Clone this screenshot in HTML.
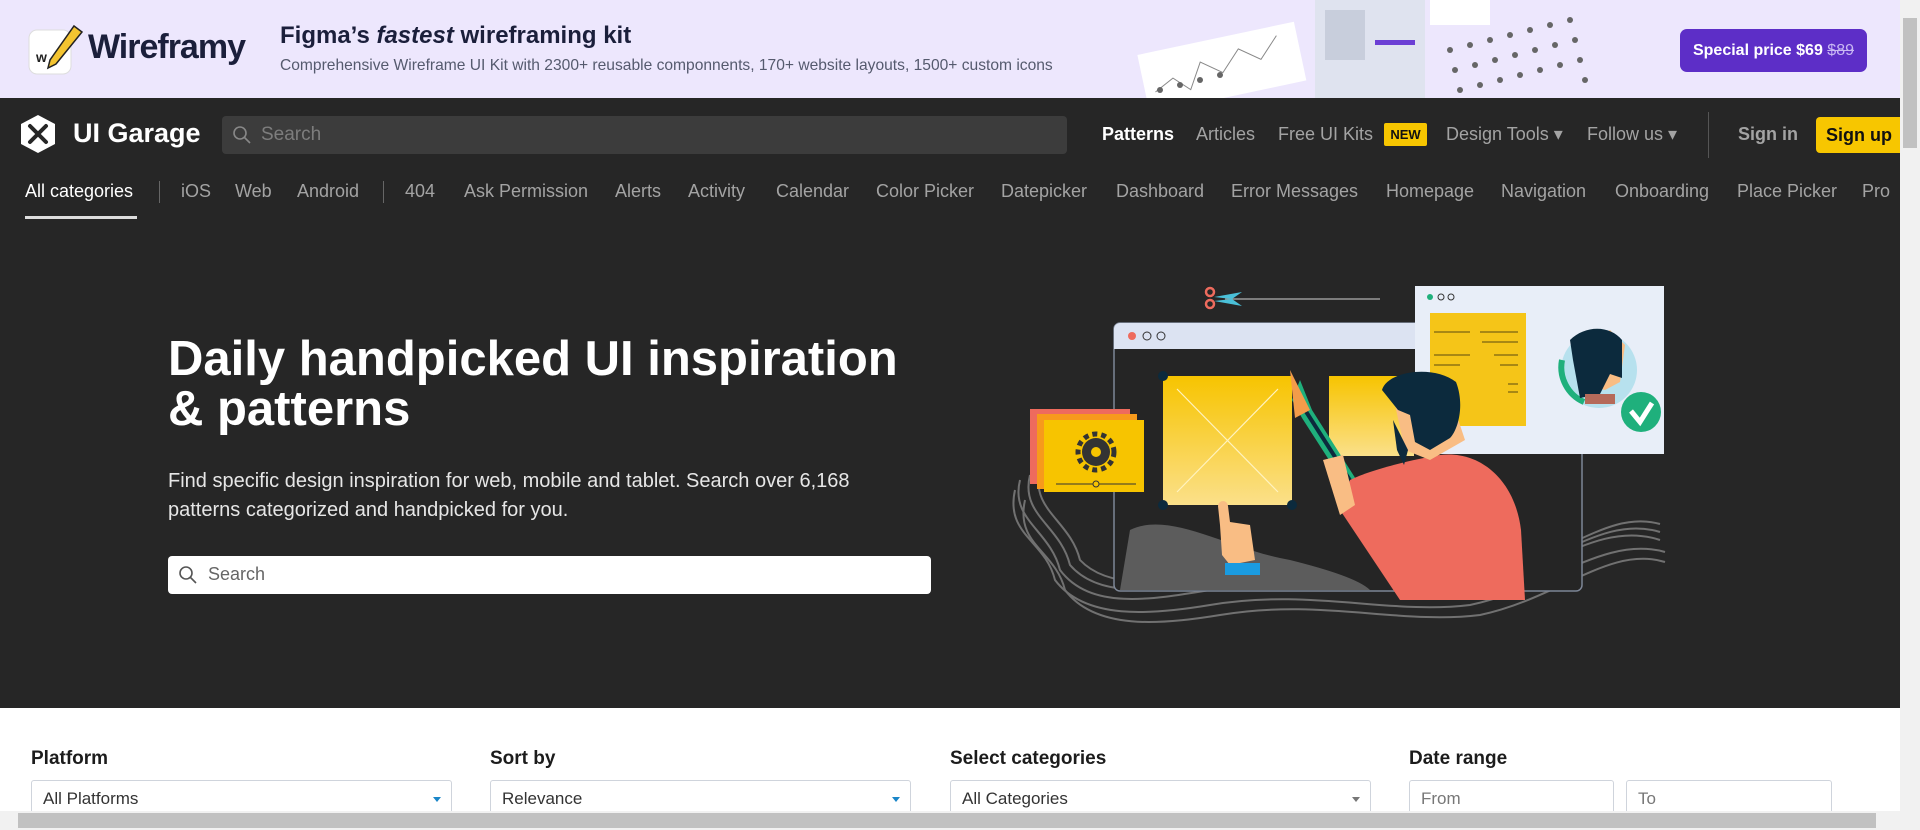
<!DOCTYPE html>
<html><head><meta charset="utf-8">
<style>
*{box-sizing:border-box;margin:0;padding:0}
html,body{width:1920px;height:830px;overflow:hidden;background:#fff;font-family:"Liberation Sans",sans-serif}
.abs{position:absolute}
#banner{position:absolute;left:0;top:0;width:1900px;height:98px;background:#ede7fd;overflow:hidden}
#nav{position:absolute;left:0;top:98px;width:1900px;height:610px;background:#262626}
.cat{position:absolute;top:181px;font-size:18px;color:#a3a3a3;white-space:nowrap}
.navl{position:absolute;top:124px;font-size:18px;color:#a3a3a3;white-space:nowrap}
.lbl{position:absolute;top:748px;font-size:19px;font-weight:bold;color:#1c1c1c}
.inp{position:absolute;top:780px;height:40px;border:1px solid #cfd4dc;border-radius:3px;background:#fff;font-size:17px;color:#333;padding:8px 11px}
.car{position:absolute;right:10px;top:16px;width:0;height:0;border-left:4px solid transparent;border-right:4px solid transparent;border-top:5px solid #1a86c8}
</style></head><body>
<div id="banner">
  <svg class="abs" style="left:26px;top:24px" width="60" height="54" viewBox="0 0 60 54">
    <rect x="3" y="6" width="42" height="44" rx="8" fill="#fff" stroke="#ddd"/>
    <text x="10" y="38" font-size="14" font-weight="bold" fill="#222" font-family="Liberation Sans">w</text>
    <path d="M48 2 L56 8 L30 40 L22 44 L24 36 Z" fill="#f4c430" stroke="#222" stroke-width="1.5"/>
  </svg>
  <div class="abs" style="left:88px;top:28px;font-size:34px;font-weight:bold;color:#1b1f3b;letter-spacing:-1px">Wireframy</div>
  <div class="abs" style="left:280px;top:22px;font-size:24px;font-weight:bold;color:#1b1f3b">Figma’s <i>fastest</i> wireframing kit</div>
  <div class="abs" style="left:280px;top:57px;font-size:15.6px;color:#555a6e">Comprehensive Wireframe UI Kit with 2300+ reusable componnents, 170+ website layouts, 1500+ custom icons</div>
  <svg class="abs" style="left:1130px;top:0" width="560" height="98">
    <g transform="rotate(-12 80 60)"><rect x="10" y="40" width="160" height="60" fill="#fff"/><path d="M20 80 L40 70 L55 85 L70 60 L90 75 L110 55 L130 70 L150 50" stroke="#888" fill="none"/></g>
    <rect x="185" y="0" width="110" height="98" fill="#dfe3ef"/><rect x="195" y="10" width="40" height="50" fill="#c8cedc"/><rect x="245" y="40" width="40" height="5" fill="#6b3fd4"/>
    <rect x="300" y="0" width="60" height="25" fill="#fff"/>
    <g fill="#666"><circle cx="320" cy="50" r="3"/><circle cx="340" cy="45" r="3"/><circle cx="360" cy="40" r="3"/><circle cx="380" cy="35" r="3"/><circle cx="400" cy="30" r="3"/><circle cx="420" cy="25" r="3"/><circle cx="325" cy="70" r="3"/><circle cx="345" cy="65" r="3"/><circle cx="365" cy="60" r="3"/><circle cx="385" cy="55" r="3"/><circle cx="405" cy="50" r="3"/><circle cx="425" cy="45" r="3"/><circle cx="330" cy="90" r="3"/><circle cx="350" cy="85" r="3"/><circle cx="370" cy="80" r="3"/><circle cx="390" cy="75" r="3"/><circle cx="410" cy="70" r="3"/><circle cx="430" cy="65" r="3"/><circle cx="440" cy="20" r="3"/><circle cx="445" cy="40" r="3"/><circle cx="450" cy="60" r="3"/><circle cx="455" cy="80" r="3"/><circle cx="30" cy="90" r="3"/><circle cx="50" cy="85" r="3"/><circle cx="70" cy="80" r="3"/><circle cx="90" cy="75" r="3"/></g>
  </svg>
  <div class="abs" style="left:1680px;top:29px;width:187px;height:43px;background:#5d2ec7;border-radius:7px;color:#fff;font-size:16px;font-weight:bold;line-height:43px;text-align:center">Special price $69 <span style="text-decoration:line-through;font-weight:normal;color:#c9b8f3">$89</span></div>
</div>
<div id="nav"></div>
<svg class="abs" style="left:19px;top:114px" width="38" height="40" viewBox="0 0 38 40">
  <path d="M19 1 L36 10 L36 30 L19 39 L2 30 L2 10 Z" fill="#fff"/>
  <path d="M11 12 L27 28 M27 12 L11 28" stroke="#262626" stroke-width="4" stroke-linecap="round"/>
</svg>
<div class="abs" style="left:73px;top:118px;font-size:27px;font-weight:bold;color:#fff">UI Garage</div>
<div class="abs" style="left:222px;top:116px;width:845px;height:38px;background:#3c3c3c;border-radius:4px"></div>
<svg class="abs" style="left:232px;top:125px" width="20" height="20"><circle cx="8" cy="8" r="6" stroke="#888" stroke-width="1.6" fill="none"/><path d="M12.5 12.5 L18 18" stroke="#888" stroke-width="1.6"/></svg>
<div class="abs" style="left:261px;top:124px;font-size:19px;color:#7d7d7d">Search</div>
<div class="navl" style="left:1102px;color:#fff;font-weight:bold">Patterns</div>
<div class="navl" style="left:1196px">Articles</div>
<div class="navl" style="left:1278px">Free UI Kits</div>
<div class="abs" style="left:1384px;top:123px;width:43px;height:23px;background:#f7c600;border-radius:2px;font-size:13px;font-weight:bold;color:#111;text-align:center;line-height:23px">NEW</div>
<div class="navl" style="left:1446px">Design Tools ▾</div>
<div class="navl" style="left:1587px">Follow us ▾</div>
<div class="abs" style="left:1708px;top:112px;width:1px;height:46px;background:#555"></div>
<div class="navl" style="left:1738px;font-weight:bold;color:#a3a3a3">Sign in</div>
<div class="abs" style="left:1816px;top:117px;width:84px;height:36px;background:#f7c600;border-radius:4px 0 0 4px;font-size:18px;font-weight:bold;color:#111;line-height:36px;padding-left:10px">Sign up</div>
<div class="cat" style="left:25px;color:#fff">All categories</div>
<div class="abs" style="left:25px;top:216px;width:112px;height:3px;background:#ddd"></div>
<div class="abs" style="left:159px;top:181px;width:1px;height:22px;background:#666"></div>
<div class="cat" style="left:181px">iOS</div>
<div class="cat" style="left:235px">Web</div>
<div class="cat" style="left:297px">Android</div>
<div class="abs" style="left:383px;top:181px;width:1px;height:22px;background:#666"></div>
<div class="cat" style="left:405px">404</div>
<div class="cat" style="left:464px">Ask Permission</div>
<div class="cat" style="left:615px">Alerts</div>
<div class="cat" style="left:688px">Activity</div>
<div class="cat" style="left:776px">Calendar</div>
<div class="cat" style="left:876px">Color Picker</div>
<div class="cat" style="left:1001px">Datepicker</div>
<div class="cat" style="left:1116px">Dashboard</div>
<div class="cat" style="left:1231px">Error Messages</div>
<div class="cat" style="left:1386px">Homepage</div>
<div class="cat" style="left:1501px">Navigation</div>
<div class="cat" style="left:1615px">Onboarding</div>
<div class="cat" style="left:1737px">Place Picker</div>
<div class="cat" style="left:1862px">Pro</div>
<div class="abs" style="left:168px;top:334px;font-size:49px;font-weight:bold;color:#fff;line-height:50px;width:760px">Daily handpicked UI inspiration<br>&amp; patterns</div>
<div class="abs" style="left:168px;top:467px;font-size:20px;color:#e6e6e6;line-height:29px">Find specific design inspiration for web, mobile and tablet. Search over 6,168<br>patterns categorized and handpicked for you.</div>
<div class="abs" style="left:168px;top:556px;width:763px;height:38px;background:#fff;border-radius:4px"></div>
<svg class="abs" style="left:178px;top:565px" width="20" height="20"><circle cx="8" cy="8" r="6" stroke="#555" stroke-width="1.6" fill="none"/><path d="M12.5 12.5 L18 18" stroke="#555" stroke-width="1.6"/></svg>
<div class="abs" style="left:208px;top:564px;font-size:18px;color:#666">Search</div>
<svg class="abs" style="left:1010px;top:270px" width="660" height="370" viewBox="0 0 660 370">
  <g stroke="#8a8a8a" stroke-width="2" fill="none" opacity="0.75">
    <path d="M10 210 C0 250 40 260 50 300 C80 340 140 330 200 320 C300 300 380 330 460 320 C540 300 590 250 650 270"/>
    <path d="M20 205 C10 245 50 255 60 295 C90 330 150 320 210 312 C310 292 390 322 470 312 C550 292 595 245 650 262"/>
    <path d="M30 200 C20 240 60 250 70 290 C100 322 160 312 220 304 C320 284 400 314 480 304 C560 284 600 240 650 254"/>
    <path d="M5 220 C-5 265 35 270 45 310 C75 350 140 345 200 335 C300 318 380 345 460 335 C540 318 595 265 655 282"/>
    <path d="M15 230 C5 275 45 280 55 320 C85 360 150 355 210 345 C310 328 390 355 470 345 C550 328 600 275 655 292"/>
  </g>
  <line x1="215" y1="29" x2="370" y2="29" stroke="#999" stroke-width="1.5"/>
  <circle cx="200" cy="22" r="4" fill="none" stroke="#ee6b5d" stroke-width="2.5"/><circle cx="200" cy="34" r="4" fill="none" stroke="#ee6b5d" stroke-width="2.5"/>
  <path d="M204 27 L232 22 L222 29 Z M204 31 L232 36 L222 29 Z" fill="#4ac0d8"/>
  <rect x="104" y="53" width="468" height="268" rx="6" fill="#252525" stroke="#7d8696" stroke-width="1.5"/>
  <path d="M104 59 a6 6 0 0 1 6 -6 h456 a6 6 0 0 1 6 6 v20 h-468 Z" fill="#dce3f2"/>
  <circle cx="122" cy="66" r="4" fill="#ee6b5d"/><circle cx="137" cy="66" r="4" fill="none" stroke="#333"/><circle cx="151" cy="66" r="4" fill="none" stroke="#333"/>
  <path d="M120 260 C160 240 220 280 280 290 C320 300 350 310 360 320 L110 320 Z" fill="#ddd" opacity="0.3"/>
  <defs><linearGradient id="yg" x1="0" y1="0" x2="0" y2="1"><stop offset="0" stop-color="#f7c400"/><stop offset="1" stop-color="#fbe08a"/></linearGradient></defs>
  <rect x="153" y="106" width="129" height="129" fill="url(#yg)"/>
  <path d="M167 119 L268 222 M268 119 L167 222" stroke="#fff3c0" stroke-width="1.2"/>
  <circle cx="153" cy="106" r="5" fill="#0c2a3d"/><circle cx="153" cy="235" r="5" fill="#0c2a3d"/><circle cx="282" cy="235" r="5" fill="#0c2a3d"/>
  <rect x="319" y="106" width="85" height="80" fill="url(#yg)"/>
  <rect x="405" y="16" width="249" height="168" fill="#e8eef8"/>
  <circle cx="420" cy="27" r="3" fill="#1fb07c"/><circle cx="431" cy="27" r="3" fill="none" stroke="#333"/><circle cx="441" cy="27" r="3" fill="none" stroke="#333"/>
  <rect x="420" y="43" width="96" height="113" fill="#f5c518"/>
  <g stroke="#5a4a10" stroke-width="1"><line x1="424" y1="62" x2="460" y2="62"/><line x1="470" y1="62" x2="508" y2="62"/><line x1="472" y1="72" x2="508" y2="72"/><line x1="424" y1="85" x2="460" y2="85"/><line x1="484" y1="85" x2="508" y2="85"/><line x1="424" y1="95" x2="450" y2="95"/><line x1="490" y1="95" x2="508" y2="95"/><line x1="498" y1="114" x2="508" y2="114"/><line x1="498" y1="122" x2="508" y2="122"/></g>
  <circle cx="589" cy="100" r="38" fill="#b7e1ee"/>
  <path d="M552 90 a38 38 0 0 0 22 42" stroke="#1fb07c" stroke-width="6" fill="none"/>
  <path d="M568 80 L600 60 L615 75 L610 112 L595 120 L580 116 Z" fill="#f9bd84"/>
  <path d="M560 70 C575 55 600 55 612 70 L612 108 L600 104 L590 124 L570 128 L563 90 Z" fill="#0c2a3d"/>
  <rect x="575" y="124" width="30" height="10" fill="#b56a5a"/>
  <circle cx="631" cy="142" r="20" fill="#1fb07c"/><path d="M621 141 L630 152 L642 133" stroke="#fff" stroke-width="5" fill="none"/>
  <rect x="20" y="139" width="100" height="75" fill="#ee6b5d"/>
  <rect x="27" y="144" width="100" height="75" fill="#f79a1c"/>
  <rect x="34" y="150" width="100" height="72" fill="#f7c400"/>
  <circle cx="86" cy="182" r="14" fill="#333"/><circle cx="86" cy="182" r="18" fill="none" stroke="#333" stroke-width="5" stroke-dasharray="5 4"/><circle cx="86" cy="182" r="5" fill="#f7c400"/>
  <line x1="46" y1="214" x2="126" y2="214" stroke="#333"/><circle cx="86" cy="214" r="3" fill="#f7c400" stroke="#333"/>
  <path d="M210 255 L208 236 a5 5 0 0 1 10 0 L220 252 L240 255 L245 290 L220 295 L212 285 Z" fill="#f9bd84"/>
  <rect x="215" y="293" width="35" height="12" fill="#1a9be0"/>
  <path d="M290 110 L302 140 L410 310 L400 316 L292 148 L282 130 Z" fill="#1fb07c"/>
  <path d="M295 140 L405 312" stroke="#0c2a3d" stroke-width="4"/>
  <path d="M280 100 L300 140 L285 148 Z" fill="#f39c4a"/>
  <path d="M340 210 C360 200 400 190 430 185 C470 180 505 210 511 260 L515 330 L390 330 L370 300 L330 240 Z" fill="#ee6b5d"/>
  <path d="M313 190 L333 185 L345 235 L330 245 Z" fill="#f9bd84"/>
  <path d="M385 135 L440 125 L455 170 L420 190 L395 180 Z" fill="#f9bd84"/>
  <path d="M372 120 C378 100 425 95 446 112 C455 135 448 160 440 168 L420 180 L405 172 L400 145 L388 140 Z" fill="#0c2a3d"/>
  <path d="M383 150 L398 180 L394 195 L387 180 Z" fill="#0c2a3d"/>
</svg>
<div class="abs" style="left:0;top:708px;width:1900px;height:104px;background:#fff"></div>
<div class="lbl" style="left:31px">Platform</div>
<div class="lbl" style="left:490px">Sort by</div>
<div class="lbl" style="left:950px">Select categories</div>
<div class="lbl" style="left:1409px">Date range</div>
<div class="inp" style="left:31px;width:421px">All Platforms<span class="car"></span></div>
<div class="inp" style="left:490px;width:421px">Relevance<span class="car"></span></div>
<div class="inp" style="left:950px;width:421px">All Categories<span class="car" style="border-top-color:#777"></span></div>
<div class="inp" style="left:1409px;width:205px;color:#777">From</div>
<div class="inp" style="left:1626px;width:206px;color:#777">To</div>
<div class="abs" style="left:1900px;top:0;width:20px;height:811px;background:#f1f1f1"></div>
<div class="abs" style="left:1903px;top:18px;width:14px;height:130px;background:#c1c1c1"></div>
<div class="abs" style="left:0;top:811px;width:1920px;height:19px;background:#f1f1f1"></div>
<div class="abs" style="left:18px;top:813px;width:1858px;height:15px;background:#c1c1c1"></div>
</body></html>
